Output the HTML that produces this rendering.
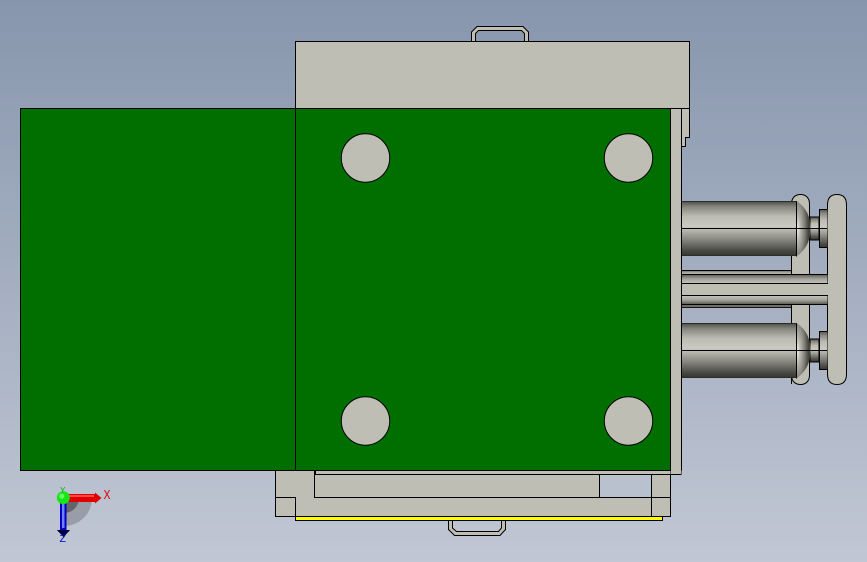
<!DOCTYPE html>
<html><head><meta charset="utf-8"><style>
html,body{margin:0;padding:0;width:867px;height:562px;overflow:hidden}
body{background:linear-gradient(180deg,#8796ad 0%,#c1c7d4 100%)}
svg{display:block;position:absolute;left:0;top:0}
</style></head><body>
<svg width="867" height="562" viewBox="0 0 867 562" xmlns="http://www.w3.org/2000/svg">
<defs>
<linearGradient id="cyl" x1="0" y1="0" x2="0" y2="1">
<stop offset="0" stop-color="#4a4a45"/><stop offset=".1" stop-color="#84847d"/><stop offset=".28" stop-color="#bcbcb3"/><stop offset=".46" stop-color="#cacac2"/><stop offset=".68" stop-color="#8e8e87"/><stop offset=".9" stop-color="#4a4a45"/><stop offset="1" stop-color="#33332f"/>
</linearGradient>
<linearGradient id="rodA" x1="0" y1="0" x2="0" y2="1">
<stop offset="0" stop-color="#5d5d56"/><stop offset=".5" stop-color="#a5a59d"/><stop offset="1" stop-color="#c4c4bb"/>
</linearGradient>
<linearGradient id="rodB" x1="0" y1="0" x2="0" y2="1">
<stop offset="0" stop-color="#c4c4bb"/><stop offset=".5" stop-color="#a5a59d"/><stop offset="1" stop-color="#55554f"/>
</linearGradient>
<radialGradient id="dome" cx="0.05" cy="0.5" r="0.8">
<stop offset="0" stop-color="#f0f0ea"/><stop offset=".3" stop-color="#b5b5ad"/><stop offset=".7" stop-color="#7b7b74"/><stop offset="1" stop-color="#46463f"/>
</radialGradient>
</defs>

<!-- handles -->
<g fill="#bebeb4" stroke="#000" stroke-width="1">
<path d="M471.5 41.5V32L477 26.5H523L528.5 32V41.5H524.5V33.5L521.5 30.5H478.5L475.5 33.5V41.5Z"/>
<path d="M448.5 520.5V529.5L454.5 535.5H500L505.5 529.5V520.5H501.5V528L498.5 531.5H456.5L452.5 528V520.5Z"/>
</g>

<!-- ear plates -->
<g fill="#bebeb4" stroke="#000" stroke-width="1">
<path d="M791.5 384V204C791.5 198 795 194.5 800.5 194.5C806 194.5 809.5 198 809.5 204V375C809.5 381 806 384.5 800.5 384.5C795 384.5 791.5 381 791.5 375Z"/>
<path d="M827.5 205C827.5 198 831 194.5 837 194.5C843 194.5 846.5 198 846.5 205V374C846.5 381 843 384.5 837 384.5C831 384.5 827.5 381 827.5 374Z"/>
</g>

<!-- thin rods -->
<rect x="681.5" y="270" width="110" height="5" fill="url(#rodA)"/>
<path d="M681.5 270.5H791.5" stroke="#000"/>
<rect x="681.5" y="304" width="110" height="4" fill="#6f6f68"/>
<path d="M681.5 307.5H791.5" stroke="#000" stroke-opacity=".8"/>
<!-- main rod -->
<rect x="681.5" y="274.5" width="146" height="9" fill="url(#rodA)"/>
<rect x="681.5" y="283.5" width="146" height="12" fill="#bebeb4"/>
<rect x="681.5" y="295.5" width="146" height="9" fill="url(#rodB)"/>
<path d="M681.5 274.5H827.5M681.5 283.5H827.5M681.5 295.5H827.5M681.5 304.5H827.5" stroke="#000" fill="none"/>
<rect x="826" y="284" width="3" height="11" fill="#bebeb4"/>
<path d="M791.5 256V274M809.5 256V274M791.5 305V323M809.5 305V323" stroke="#000" fill="none"/>

<!-- upper cylinder -->
<g>
<rect x="810" y="217" width="9" height="23" fill="url(#cyl)" stroke="#000"/>
<rect x="819" y="209" width="8.500" height="39" fill="url(#cyl)"/>
<path d="M819.500 209.500H827M819.500 209V248M819.500 247.500H827M810 228.500H827" stroke="#000" fill="none"/>
<path d="M796.500 201C804 206 810.500 214 810.500 228.500C810.500 243 804 251 796.500 256.500Z" fill="url(#dome)"/>
<rect x="681.500" y="201" width="115" height="55" fill="url(#cyl)"/>
<path d="M681.500 228.500H810M796.500 201V256.500" stroke="#000" fill="none"/>
<path d="M681.500 201.500H796.500M681.500 255.500H796.500" stroke="#2c2c28" fill="none"/>
</g>
<!-- lower cylinder -->
<g>
<rect x="810" y="339" width="9" height="23" fill="url(#cyl)" stroke="#000"/>
<rect x="819" y="331" width="8.500" height="39" fill="url(#cyl)"/>
<path d="M819.500 331.500H827M819.500 331V370M819.500 369.500H827M810 350.500H827" stroke="#000" fill="none"/>
<path d="M796.500 323C804 328 810.500 336 810.500 350.500C810.500 365 804 373 796.500 378.500Z" fill="url(#dome)"/>
<rect x="681.500" y="323" width="115" height="55" fill="url(#cyl)"/>
<path d="M681.500 350.500H810M796.500 323V378.500" stroke="#000" fill="none"/>
<path d="M681.500 323.500H796.500M681.500 377.500H796.500" stroke="#2c2c28" fill="none"/>
</g>

<g shape-rendering="crispEdges">
<!-- top box -->
<rect x="295.500" y="41.500" width="394" height="67" fill="#bebeb4" stroke="#000"/>
<!-- right strip -->
<path d="M670.500 108.500H689.500V137.500H685.500V146.500H681.500V473.500H670.500Z" fill="#bebeb4" stroke="#000"/>
<!-- bottom assembly -->
<rect x="295.500" y="516.500" width="367" height="4" fill="#ffff00" stroke="#000"/>
<path d="M275.500 470.500H670.500V516.500H275.500Z" fill="#bebeb4" stroke="#000"/>
<rect x="670.500" y="470.500" width="11" height="4" fill="#bebeb4"/>
<path d="M670.500 474.500H681.500" stroke="#000" fill="none"/>
<rect x="599.500" y="474.500" width="52" height="23" fill="#b9c0ce" stroke="#000"/>
<path d="M314.500 470.500V497.500H670.500M314.500 474.500H670.500M651.500 474.500V516.500M275.500 497.500H295.500V516.500" stroke="#000" fill="none"/>
<rect x="314" y="471" width="2" height="3" fill="#000"/>
<!-- green -->
<rect x="20.500" y="108.500" width="650" height="362" fill="#006f00" stroke="#000"/>
<path d="M295.500 108.500V470.500" stroke="#000" fill="none"/>
</g>
<path d="M681.500 108.500V146" stroke="#000" fill="none" shape-rendering="crispEdges"/>

<!-- holes -->
<g fill="#bebeb4" stroke="#000" stroke-width="1">
<circle cx="365.500" cy="158" r="24.200"/>
<circle cx="628.500" cy="158" r="24.200"/>
<circle cx="365.500" cy="421" r="24.200"/>
<circle cx="628.500" cy="421" r="24.200"/>
</g>

<!-- triad -->
<path d="M64 498H92A28 28 0 0 1 64 526Z" fill="#8d9098" fill-opacity=".75"/>
<path d="M64 498H79A15 15 0 0 1 64 513Z" fill="#55575c" fill-opacity=".8"/>
<path d="M66 494H95V492.500L101.500 498L95 503.500V502H66Z" fill="#e00000"/>
<rect x="68" y="495" width="26" height="2" fill="#ff4a4a"/>
<path d="M60 500H66.500V530H70L63.500 537L57 530H60Z" fill="#0000c0"/>
<rect x="62" y="502" width="2.500" height="26" fill="#7080ff"/>
<path d="M57 530H70L63.500 537Z" fill="#00003a"/>
<circle cx="63.300" cy="497.700" r="6.500" fill="#16e816"/>
<circle cx="61.800" cy="496.200" r="2.500" fill="#6cf56c"/>
<text x="103.500" y="499" font-family="Liberation Sans, sans-serif" font-size="13" fill="#e00000" textLength="7" lengthAdjust="spacingAndGlyphs">X</text>
<text x="60" y="493" font-family="Liberation Sans, sans-serif" font-size="8" fill="#00b000">Y</text>
<text x="59.500" y="542" font-family="Liberation Sans, sans-serif" font-size="10.500" fill="#0000d0">Z</text>
</svg>
</body></html>
